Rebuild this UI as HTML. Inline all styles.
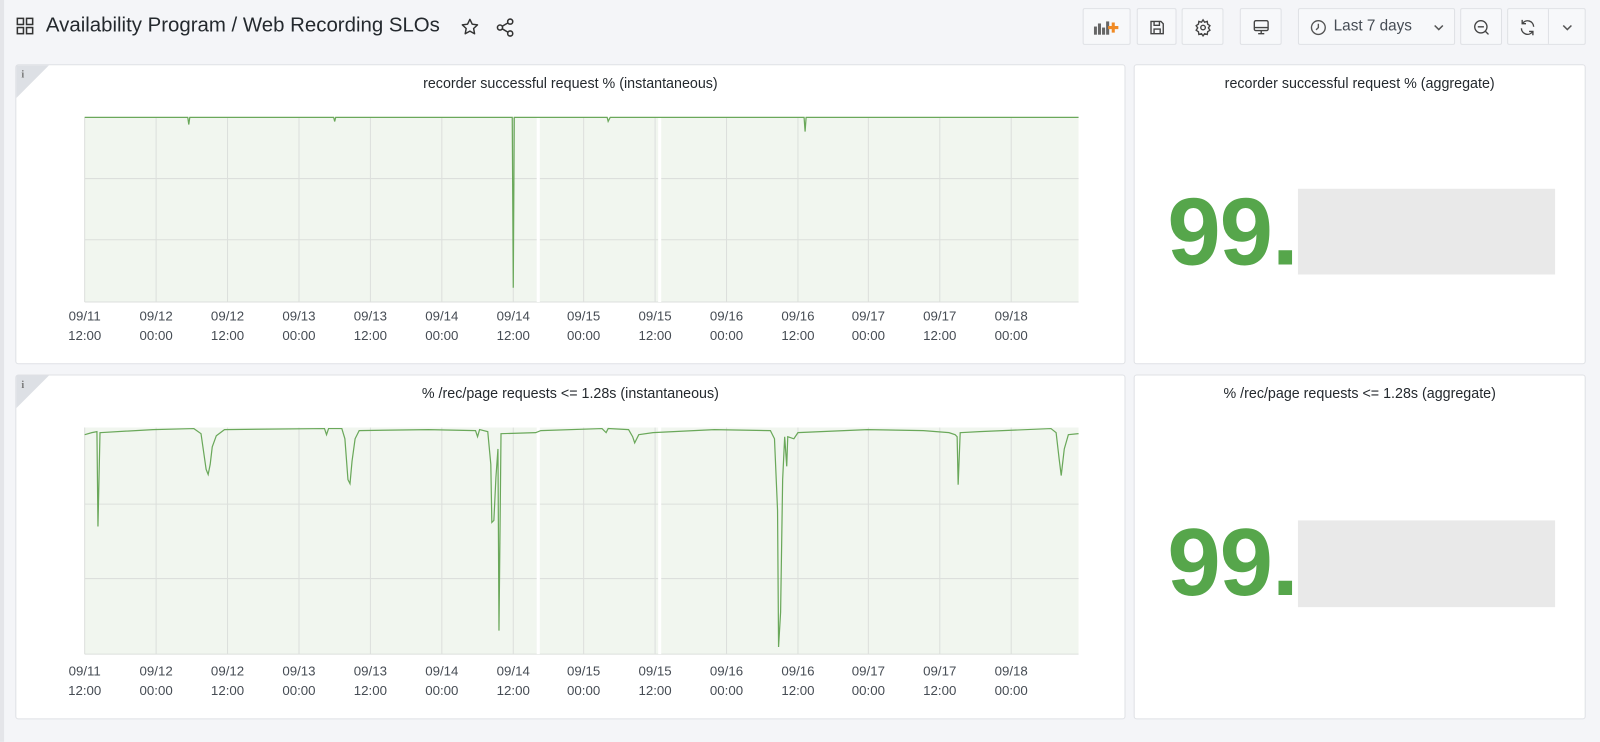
<!DOCTYPE html>
<html><head><meta charset="utf-8"><style>
*{box-sizing:border-box;margin:0;padding:0}
body{width:1600px;height:727px;background:#f4f5f8;font-family:"Liberation Sans",sans-serif;position:relative;overflow:hidden;color:#24292e}
#w{position:absolute;left:0;top:0;width:1568px;height:713px;transform:scale(1.0204);transform-origin:0 0}
.strip{position:absolute;left:0;top:0;width:4px;height:727px;background:#e4e5e9}
.title{position:absolute;left:45px;top:14px;font-size:20px;color:#24292e}
.btn{position:absolute;top:8px;height:36px;border:1px solid #dfe1e5;border-radius:2px;background:#f7f8fa}
.panel{position:absolute;background:#fff;border:1px solid #dfe1e5;border-radius:3px}
.ptitle{position:absolute;left:0;right:0;top:9px;text-align:center;font-size:14px;color:#24292e}
.lbl{position:absolute;font-size:13px;color:#464c54;text-align:center;width:60px;line-height:19px}
.big{position:absolute;font-size:94px;font-weight:bold;color:#56a64b;letter-spacing:-1px}
.grey{position:absolute;background:#e9e9e9}
</style></head><body><div id="w">
<div class="strip"></div>
<svg style="position:absolute;left:16px;top:17px" width="18" height="18" viewBox="0 0 18 18" fill="none" stroke="#333" stroke-width="1.5"><rect x="1" y="1" width="6" height="6"/><rect x="10" y="1" width="6" height="6"/><rect x="1" y="10" width="6" height="6"/><rect x="10" y="10" width="6" height="6"/></svg>
<div class="title">Availability Program / Web Recording SLOs</div>
<svg style="position:absolute;left:451px;top:17px" width="19" height="19" viewBox="0 0 24 24" fill="none" stroke="#333" stroke-width="1.8" stroke-linejoin="round"><path d="M12 2.5l2.9 6 6.5.8-4.8 4.5 1.2 6.5L12 17.1 6.2 20.3l1.2-6.5L2.6 9.3l6.5-.8z"/></svg>
<svg style="position:absolute;left:485px;top:17px" width="20" height="20" viewBox="0 0 24 24" fill="none" stroke="#333" stroke-width="1.8"><circle cx="18" cy="5" r="3"/><circle cx="6" cy="12" r="3"/><circle cx="18" cy="19" r="3"/><path d="M8.6 10.5l6.8-4M8.6 13.5l6.8 4"/></svg>

<div class="btn" style="left:1061px;width:47px"><svg style="position:absolute;left:10px;top:9px" width="26" height="18" viewBox="0 0 26 18"><rect x="0" y="8" width="3" height="8" fill="#666"/><rect x="4" y="5" width="3" height="11" fill="#666"/><rect x="8" y="9" width="3" height="7" fill="#666"/><rect x="12" y="3" width="3" height="13" fill="#666"/><path d="M19 4v10M14 9h10" stroke="#f08a24" stroke-width="3"/></svg></div>
<div class="btn" style="left:1114px;width:39px"><svg style="position:absolute;left:10px;top:9px" width="18" height="18" viewBox="0 0 24 24" fill="none" stroke="#444" stroke-width="1.8"><path d="M4 4h13l3 3v13H4z"/><path d="M8 4v5h7V4M8 20v-6h8v6"/></svg></div>
<div class="btn" style="left:1158px;width:41px"><svg style="position:absolute;left:11px;top:9px" width="18" height="18" viewBox="0 0 24 24" fill="none" stroke="#444" stroke-width="1.8"><circle cx="12" cy="12" r="3"/><path d="M12 2l2 3 3.5-1 .5 3.5 3 2-2 3 2 3-3 2-.5 3.5-3.5-1-2 3-2-3-3.5 1L6 17.5l-3-2 2-3-2-3 3-2L6.5 4 10 5z"/></svg></div>
<div class="btn" style="left:1215px;width:41px"><svg style="position:absolute;left:11px;top:9px" width="18" height="18" viewBox="0 0 24 24" fill="none" stroke="#444" stroke-width="1.8"><rect x="3" y="3" width="18" height="13" rx="2"/><path d="M3 12h18M8 20h8M12 16v4"/></svg></div>
<div class="btn" style="left:1272px;width:154px"><svg style="position:absolute;left:10px;top:9px" width="18" height="18" viewBox="0 0 24 24" fill="none" stroke="#555" stroke-width="1.8"><circle cx="12" cy="12" r="9"/><path d="M12 7v5l-3 3"/></svg><span style="position:absolute;left:34px;top:8px;font-size:15px;color:#464c54">Last 7 days</span><svg style="position:absolute;left:132px;top:14px" width="10" height="8" viewBox="0 0 10 8" fill="none" stroke="#555" stroke-width="1.5"><path d="M1 2l4 4 4-4"/></svg></div>
<div class="btn" style="left:1431px;width:41px"><svg style="position:absolute;left:11px;top:9px" width="18" height="18" viewBox="0 0 24 24" fill="none" stroke="#444" stroke-width="1.8"><circle cx="11" cy="11" r="8"/><path d="M7 11h8M17 17l4 4"/></svg></div>
<div class="btn" style="left:1477px;width:77px"><svg style="position:absolute;left:10px;top:9px" width="18" height="18" viewBox="0 0 24 24" fill="none" stroke="#444" stroke-width="1.8"><path d="M20 11A8 8 0 0 0 5.5 6.5M4 13a8 8 0 0 0 14.5 4.5"/><path d="M5 2v5h5M19 22v-5h-5"/></svg><div style="position:absolute;left:39px;top:0;width:1px;height:34px;background:#dfe1e5"></div><svg style="position:absolute;left:53px;top:14px" width="10" height="8" viewBox="0 0 10 8" fill="none" stroke="#555" stroke-width="1.5"><path d="M1 2l4 4 4-4"/></svg></div>

<div class="panel" style="left:15px;top:63px;width:1088px;height:294px"><div class="ptitle">recorder successful request % (instantaneous)</div></div>
<div class="panel" style="left:1111px;top:63px;width:443px;height:294px"><div class="ptitle">recorder successful request % (aggregate)</div></div>
<div class="panel" style="left:15px;top:367px;width:1088px;height:338px"><div class="ptitle">% /rec/page requests &lt;= 1.28s (instantaneous)</div></div>
<div class="panel" style="left:1111px;top:367px;width:443px;height:338px"><div class="ptitle">% /rec/page requests &lt;= 1.28s (aggregate)</div></div>

<svg style="position:absolute;left:0;top:0" width="1600" height="727">
<path d="M16 64h32L16 96z" fill="#dde0e5"/><text x="21" y="76" font-size="10" font-family="Liberation Serif" font-weight="bold" fill="#777">i</text>
<path d="M16 368h32L16 400z" fill="#dde0e5"/><text x="21" y="380" font-size="10" font-family="Liberation Serif" font-weight="bold" fill="#777">i</text>
<g>
<rect x="83" y="115" width="974" height="181" fill="#f1f6ef"/>
<g stroke="#dcdfdc" stroke-width="1">
<path d="M153 115v181M223 115v181M293 115v181M363 115v181M433 115v181M503 115v181M572 115v181M642 115v181M712 115v181M782 115v181M851 115v181M921 115v181M991 115v181M83 175h974M83 235h974"/>
<path d="M83 115v181M83 296h974"/></g>
<rect x="526" y="115" width="3" height="181" fill="#fff"/><rect x="645" y="115" width="3" height="181" fill="#fff"/>
<path d="M83 115H184L185 122L186 115H327L328 119L329 115H502L503 282L504 115H595L596 119L598 115H788L789 129L790 115H1057" fill="none" stroke="#6aa85a" stroke-width="1.2"/>
</g>
<g>
<rect x="83" y="419" width="974" height="222" fill="#f1f6ef"/>
<g stroke="#dcdfdc" stroke-width="1">
<path d="M153 419v222M223 419v222M293 419v222M363 419v222M433 419v222M503 419v222M572 419v222M642 419v222M712 419v222M782 419v222M851 419v222M921 419v222M991 419v222M83 494h974M83 567h974"/>
<path d="M83 419v222M83 641h974"/></g>
<rect x="526" y="419" width="3" height="222" fill="#fff"/><rect x="645" y="419" width="3" height="222" fill="#fff"/>
<path d="M83 426L90 424L95 423L96 516L98 424L150 421L190 420L197 425L202 460L204 465L206 455L208 438L212 427L220 421L318 420L320 426L322 420L335 420L338 430L341 470L343 474L345 452L348 430L352 422L420 421L466 422L468 428L470 421L478 423L481 455L482 512L484 510L486 468L488 440L489 618L491 425L525 424L530 422L590 420L594 424L596 420L616 421L620 428L622 434L626 426L640 424L700 421L755 422L759 430L762 500L763 634L765 600L767 470L769 428L771 457L772 428L778 430L782 424L850 421L905 422L930 424L936 426L938 428L939 475L941 424L960 423L1030 420L1035 424L1038 450L1040 466L1043 440L1047 426L1057 425" fill="none" stroke="#6aa85a" stroke-width="1.2"/>
</g>
</svg>

<div class="lbl" style="left:53px;top:300px">09/11<br>12:00</div>
<div class="lbl" style="left:123px;top:300px">09/12<br>00:00</div>
<div class="lbl" style="left:193px;top:300px">09/12<br>12:00</div>
<div class="lbl" style="left:263px;top:300px">09/13<br>00:00</div>
<div class="lbl" style="left:333px;top:300px">09/13<br>12:00</div>
<div class="lbl" style="left:403px;top:300px">09/14<br>00:00</div>
<div class="lbl" style="left:473px;top:300px">09/14<br>12:00</div>
<div class="lbl" style="left:542px;top:300px">09/15<br>00:00</div>
<div class="lbl" style="left:612px;top:300px">09/15<br>12:00</div>
<div class="lbl" style="left:682px;top:300px">09/16<br>00:00</div>
<div class="lbl" style="left:752px;top:300px">09/16<br>12:00</div>
<div class="lbl" style="left:821px;top:300px">09/17<br>00:00</div>
<div class="lbl" style="left:891px;top:300px">09/17<br>12:00</div>
<div class="lbl" style="left:961px;top:300px">09/18<br>00:00</div>

<div class="lbl" style="left:53px;top:648px">09/11<br>12:00</div>
<div class="lbl" style="left:123px;top:648px">09/12<br>00:00</div>
<div class="lbl" style="left:193px;top:648px">09/12<br>12:00</div>
<div class="lbl" style="left:263px;top:648px">09/13<br>00:00</div>
<div class="lbl" style="left:333px;top:648px">09/13<br>12:00</div>
<div class="lbl" style="left:403px;top:648px">09/14<br>00:00</div>
<div class="lbl" style="left:473px;top:648px">09/14<br>12:00</div>
<div class="lbl" style="left:542px;top:648px">09/15<br>00:00</div>
<div class="lbl" style="left:612px;top:648px">09/15<br>12:00</div>
<div class="lbl" style="left:682px;top:648px">09/16<br>00:00</div>
<div class="lbl" style="left:752px;top:648px">09/16<br>12:00</div>
<div class="lbl" style="left:821px;top:648px">09/17<br>00:00</div>
<div class="lbl" style="left:891px;top:648px">09/17<br>12:00</div>
<div class="lbl" style="left:961px;top:648px">09/18<br>00:00</div>

<div class="big" style="left:1144px;top:172px;line-height:110px">99.</div>
<div class="grey" style="left:1272px;top:185px;width:252px;height:84px"></div>
<div class="big" style="left:1144px;top:496px;line-height:110px">99.</div>
<div class="grey" style="left:1272px;top:510px;width:252px;height:85px"></div>
</div></body></html>
